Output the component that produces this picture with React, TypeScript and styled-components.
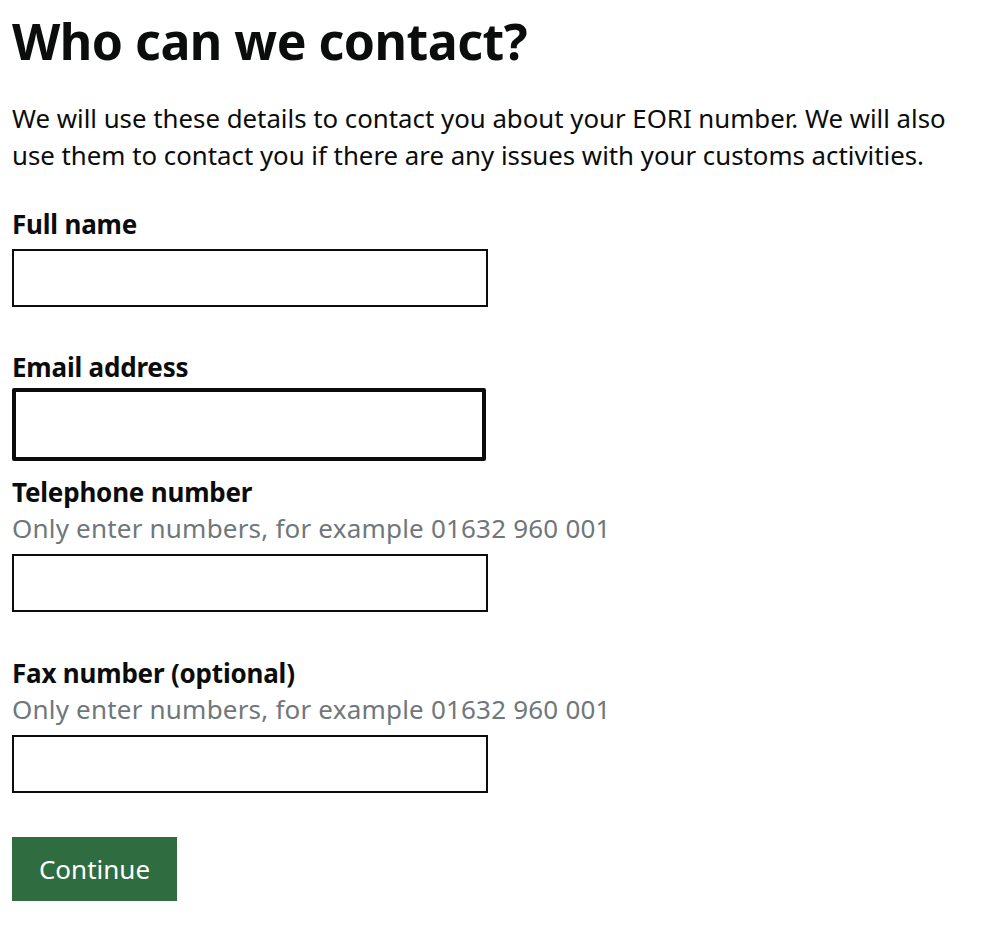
import React from "react";
import styled, { createGlobalStyle } from "styled-components";

const Global = createGlobalStyle`
  html, body { margin: 0; padding: 0; background: #ffffff; }
  body { font-family: "Noto Sans", "Liberation Sans", Arial, sans-serif; color: #0b0c0c; }
`;

const Page = styled.main`
  padding: 12px 12px 0 12px;
`;

const Heading = styled.h1`
  margin: 0 0 30px 0;
  font-size: 50px;
  line-height: 58px;
  font-weight: 700;
  letter-spacing: -0.5px;
`;

const Lead = styled.p`
  margin: 0 0 34px 0;
  font-size: 25.8px;
  line-height: 37px;
  max-width: 962px;
`;

const Group = styled.div<{ $gap: number }>`
  display: flex;
  flex-direction: column;
  margin-bottom: ${(p) => p.$gap}px;
`;

const Label = styled.label<{ $tight?: boolean }>`
  font-size: 26px;
  line-height: 32px;
  font-weight: 700;
  letter-spacing: -0.2px;
  margin-bottom: ${(p) => (p.$tight ? 5 : 9)}px;
`;

const Hint = styled.span`
  font-size: 26px;
  line-height: 32px;
  letter-spacing: 0.2px;
  color: #6f777b;
  margin-top: -5px;
  margin-bottom: 10px;
`;

const Input = styled.input<{ $focus?: boolean }>`
  box-sizing: border-box;
  width: ${(p) => (p.$focus ? 474 : 476)}px;
  height: ${(p) => (p.$focus ? 73 : 58)}px;
  border: ${(p) => (p.$focus ? 4 : 2)}px solid #0b0c0c;
  border-radius: ${(p) => (p.$focus ? 2 : 0)}px;
  background: #fff;
  font-size: 24px;
  padding: 4px 8px;
  outline: none;
`;

const Button = styled.button`
  box-sizing: border-box;
  width: 165px;
  height: 64px;
  background: #2f6c40;
  color: #ffffff;
  border: none;
  box-shadow: 0 2px 0 #1b3d25;
  font-family: "Noto Sans", "Liberation Sans", Arial, sans-serif;
  font-size: 26px;
  padding: 0;
  cursor: pointer;
`;

export default function App() {
  return (
    <>
      <Global />
      <Page>
        <Heading>Who can we contact?</Heading>
        <Lead>
          We will use these details to contact you about your EORI number. We will also use them to contact you if there are any issues with your customs activities.
        </Lead>
        <Group $gap={44}>
          <Label htmlFor="name">Full name</Label>
          <Input id="name" />
        </Group>
        <Group $gap={15}>
          <Label htmlFor="email" $tight>Email address</Label>
          <Input id="email" $focus />
        </Group>
        <Group $gap={45}>
          <Label htmlFor="tel">Telephone number</Label>
          <Hint>Only enter numbers, for example 01632 960 001</Hint>
          <Input id="tel" />
        </Group>
        <Group $gap={44}>
          <Label htmlFor="fax">Fax number (optional)</Label>
          <Hint>Only enter numbers, for example 01632 960 001</Hint>
          <Input id="fax" />
        </Group>
        <Button>Continue</Button>
      </Page>
    </>
  );
}
